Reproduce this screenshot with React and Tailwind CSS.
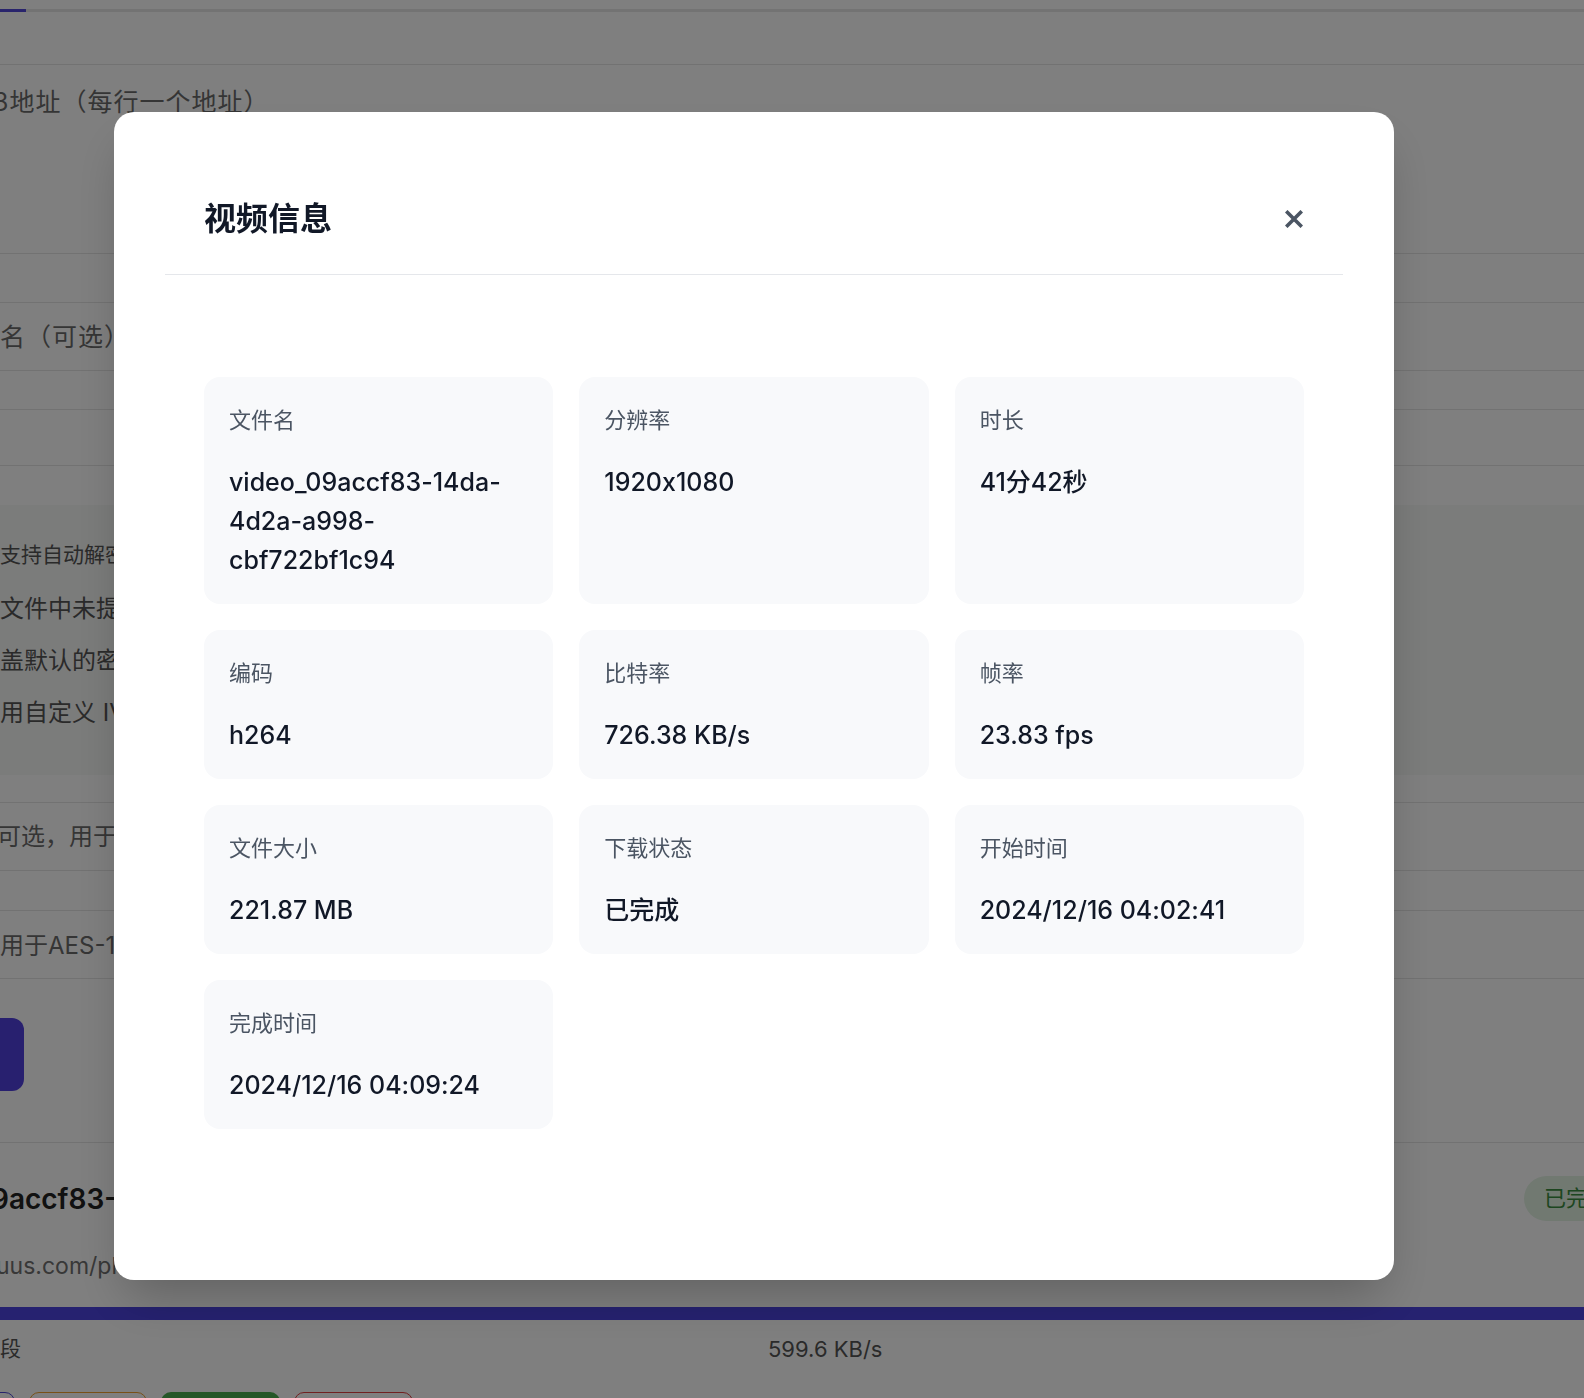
const FONT = { fontFamily: 'Inter, "Noto Sans CJK SC", sans-serif' }

const FIELDS = [
	{ label: '文件名', value: 'video_09accf83-14da-4d2a-a998-cbf722bf1c94' },
	{ label: '分辨率', value: '1920x1080' },
	{ label: '时长', value: '41分42秒' },
	{ label: '编码', value: 'h264' },
	{ label: '比特率', value: '726.38 KB/s' },
	{ label: '帧率', value: '23.83 fps' },
	{ label: '文件大小', value: '221.87 MB' },
	{ label: '下载状态', value: '已完成' },
	{ label: '开始时间', value: '2024/12/16 04:02:41' },
	{ label: '完成时间', value: '2024/12/16 04:09:24' },
]

function InfoCard({ label, value }) {
	return (
		<div className="rounded-2xl bg-[#f8f9fb] px-[25px] pt-[27px] pb-[24px]">
			<div className="text-[22px] leading-[32px] text-[#4b5563]">{label}</div>
			<div className="mt-[27px] break-words text-[25px] font-medium leading-[39px] text-[#111827] [font-feature-settings:'calt'_0]">
				{value}
			</div>
		</div>
	)
}

// the download page that sits behind the dialog
function BackgroundPage() {
	return (
		<div className="w-[1650px] bg-white text-[24px] text-[#6b6b6b]" style={FONT}>
			<div className="h-[9px]" />
			<div className="flex h-[3px] bg-[#e6e6e6]">
				<div className="w-[26px] bg-[#5248d8]" />
			</div>
			<div className="h-[53px] border-b border-[#e5e5e5]" />
			<div className="h-[189px] border-b border-[#e5e5e5] pt-[21px] leading-[32px]">
				<div className="-ml-[7px] text-[25px] tracking-[1px]">3地址（每行一个地址）</div>
			</div>
			<div className="h-[49px] border-b border-[#e5e5e5]" />
			<div className="h-[68px] border-b border-[#e5e5e5] pt-[18px] text-[25px] leading-[32px] tracking-[1px]">名（可选）</div>
			<div className="h-[39px] border-b border-[#e5e5e5]" />
			<div className="h-[56px] border-b border-[#e5e5e5]" />
			<div className="h-[39px]" />
			<div className="h-[270px] bg-[#f7f8f7] pt-[24px] leading-[52px] text-[#555]">
				<div className="text-[21px]">支持自动解密</div>
				<div className="mt-[2px]">
					<div>文件中未提供</div>
					<div>盖默认的密钥</div>
					<div>用自定义 IV</div>
				</div>
			</div>
			<div className="h-[28px] border-b border-[#e5e5e5]" />
			<div className="h-[68px] border-b border-[#e5e5e5] pt-[18px] leading-[32px]">
				<div className="-ml-[3px]">可选，用于解密</div>
			</div>
			<div className="h-[40px] border-b border-[#e5e5e5]" />
			<div className="h-[68px] border-b border-[#e5e5e5] pt-[19px] leading-[32px]">用于AES-128解密</div>
			<div className="h-[164px] border-b border-[#e5e5e5] pt-[39px]">
				<div className="h-[73px] w-[24px] rounded-r-[12px] bg-[#5040de]" />
			</div>
			<div className="flex h-[164px] justify-between">
				<div className="pt-[38px]">
					<div className="-ml-[9px] text-[28px] font-semibold leading-[36px] text-[#222]">9accf83-14da-4d2a</div>
					<div className="-ml-[4px] mt-[33px] text-[23px] leading-[32px] text-[#707070]">uus.com/play/video</div>
				</div>
				<div className="mt-[33px] flex h-[45px] w-[126px] items-center rounded-full bg-[#e2f2e3] px-[20px] text-[22px] text-[#3b8c40]">已完成</div>
			</div>
			<div className="h-[13px] bg-[#4c44e0]" />
			<div className="flex h-[72px] pt-[13px] leading-[32px] text-[#555]">
				<div className="w-[768px] text-[21px]">段</div>
				<div className="text-[22px]">599.6 KB/s</div>
			</div>
			<div className="-ml-[103px] flex gap-[14px]">
				<div className="h-[40px] w-[118px] rounded-[10px] border border-[#5048d8]" />
				<div className="h-[40px] w-[118px] rounded-[10px] border border-[#f0a030]" />
				<div className="h-[40px] w-[119px] rounded-[10px] bg-[#4caf50]" />
				<div className="h-[40px] w-[119px] rounded-[10px] border border-[#e04040]" />
			</div>
		</div>
	)
}

export default function App() {
	return (
		<div className="relative h-[1398px] overflow-hidden bg-white">
			<BackgroundPage />
			<div className="fixed inset-0 bg-black/50 pl-[114px] pt-[112px]">
				<div className="w-[1280px] rounded-[20px] bg-white px-[51px] pt-[51px] pb-[51px] shadow-2xl" style={FONT}>
					<div className="flex items-center justify-between border-b border-[#e5e7eb] pl-[39px] pr-10 pt-10 pb-[39px]">
						<h2 className="text-[32px] font-bold leading-[32px] text-[#111827]">视频信息</h2>
						<button className="flex h-[18px] w-[18px] items-center justify-center text-[#4b5563]">
							<svg width="18" height="18" viewBox="0 0 18 18" fill="none" stroke="currentColor" strokeWidth="3.6" strokeLinecap="square">
								<path d="M2.5 2.5 15.5 15.5M15.5 2.5 2.5 15.5" />
							</svg>
						</button>
					</div>
					<div className="px-[39px] pt-[102px] pb-[100px]">
						<div className="grid grid-cols-3 gap-[26px]">
							{FIELDS.map((f) => (
								<InfoCard key={f.label} label={f.label} value={f.value} />
							))}
						</div>
					</div>
				</div>
			</div>
		</div>
	)
}
